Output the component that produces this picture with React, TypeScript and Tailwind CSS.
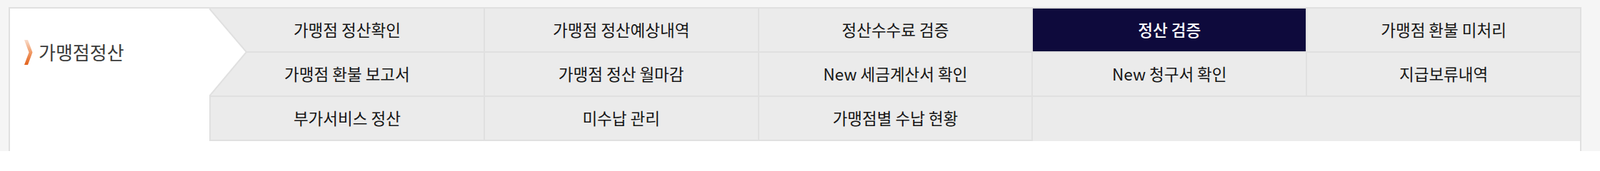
const rows: (string | null)[][] = [
  ["가맹점 정산확인", "가맹점 정산예상내역", "정산수수료 검증", "정산 검증", "가맹점 환불 미처리"],
  ["가맹점 환불 보고서", "가맹점 정산 월마감", "New 세금계산서 확인", "New 청구서 확인", "지급보류내역"],
  ["부가서비스 정산", "미수납 관리", "가맹점별 수납 현황"],
];

const active = "정산 검증";

function ChevronIcon() {
  return (
    <svg width="12" height="35" viewBox="0 0 12 35" className="shrink-0">
      <defs>
        <linearGradient id="chev" x1="0" y1="0" x2="0" y2="1">
          <stop offset="0%" stopColor="#f9dccb" />
          <stop offset="50%" stopColor="#f09a66" />
          <stop offset="100%" stopColor="#e2621d" />
        </linearGradient>
      </defs>
      <polygon points="0,0 5,0 11.5,17.5 5,35 0,35 6.5,17.5" fill="url(#chev)" />
    </svg>
  );
}

function MenuCell({ label, last }: { label: string; last: boolean }) {
  const on = label === active;
  return (
    <div
      className={
        "h-[60px] flex items-center justify-center text-[22.5px] whitespace-nowrap " +
        (on ? "bg-[#0e0a3c] text-white font-medium " : "bg-[#ebebeb] text-[#141414] ") +
        (last ? "h-[62px] border-b-2 border-[#e0e0e0]" : "")
      }
    >
      {label}
    </div>
  );
}

export default function App() {
  return (
    <div
      className="w-[2240px] h-[212px] bg-[#f5f5f5] pt-[10px] pl-[12px] overflow-hidden"
      style={{ fontFamily: '"Noto Sans CJK KR", "Noto Sans", sans-serif' }}
    >
      <div className="w-[2202px] h-[202px] bg-white border-2 border-b-0 border-[#e0e0e0] flex">
        {/* left title */}
        <div className="w-[279px] shrink-0 h-[122px] flex items-center pl-[20px] gap-[8px]">
          <ChevronIcon />
          <span className="text-[26px] text-[#3a3a3a] leading-none">가맹점정산</span>
        </div>

        {/* menu grid */}
        <div className="flex-1 relative self-start">
          <div className="grid grid-cols-5 gap-[2px] bg-[#e0e0e0] pl-[2px]">
            {rows.map((row, ri) =>
              row.map((label, ci) => (
                <MenuCell key={ri + "-" + ci} label={label as string} last={ri === rows.length - 1} />
              ))
            )}
            <div className="col-span-2 bg-[#ebebeb]" />
          </div>
          {/* chevron notch from the title panel */}
          <svg width="56" height="124" viewBox="0 0 56 124" className="absolute left-0 top-0">
            <polygon points="0,0 52,61 0,123" fill="#ffffff" />
            <polyline points="0,0 52,61 0,123" fill="none" stroke="#e0e0e0" strokeWidth="2" />
          </svg>
        </div>
      </div>
    </div>
  );
}
